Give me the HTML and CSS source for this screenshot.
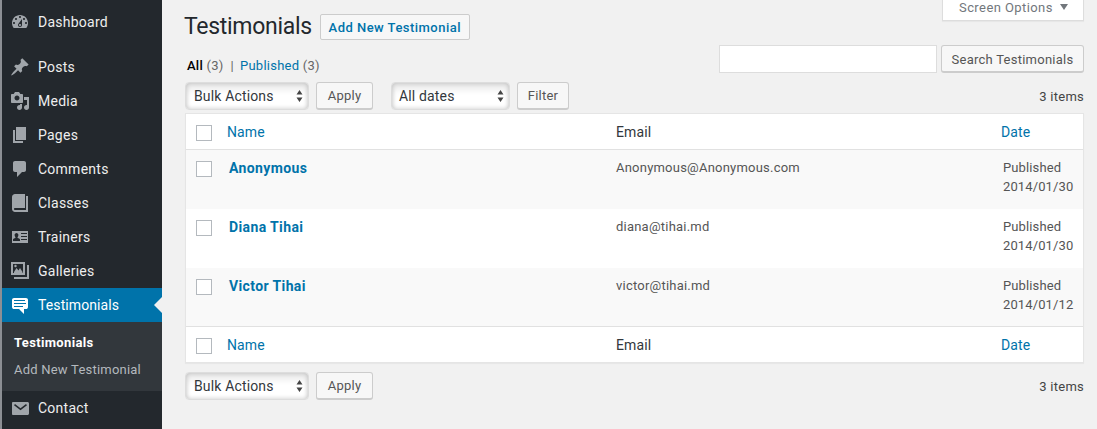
FILE: index.html
```html
<!DOCTYPE html>
<html lang="en">
<head>
<meta charset="utf-8">
<title>Testimonials</title>
<link rel="stylesheet" href="styles.css">
</head>
<body>
<div class="app">
  <nav class="sidebar">
    <a class="item gap-after"><svg class="icon" viewBox="0 0 20 20"><path d="M3.76 16h12.48c1.1-1.37 1.76-3.11 1.76-5 0-4.42-3.58-8-8-8s-8 3.58-8 8c0 1.89.66 3.63 1.76 5zM10 4c.55 0 1 .45 1 1s-.45 1-1 1-1-.45-1-1 .45-1 1-1zM6 6c.55 0 1 .45 1 1s-.45 1-1 1-1-.45-1-1 .45-1 1-1zm8 0c.55 0 1 .45 1 1s-.45 1-1 1-1-.45-1-1 .45-1 1-1zm-5.37 5.55L12 7v6c0 1.1-.9 2-2 2s-2-.9-2-2c0-.57.24-1.08.63-1.45zM4 10c.55 0 1 .45 1 1s-.45 1-1 1-1-.45-1-1 .45-1 1-1zm12 0c.55 0 1 .45 1 1s-.45 1-1 1-1-.45-1-1 .45-1 1-1zm-5 3c0-.55-.45-1-1-1s-1 .45-1 1 .45 1 1 1 1-.45 1-1z"/></svg>Dashboard</a>
    <a class="item"><svg class="icon" viewBox="0 0 20 20"><path d="M10.44 3.02l1.82-1.82 6.36 6.35-1.83 1.82c-1.05-.68-2.48-.57-3.41.36l-.75.75c-.92.93-1.04 2.35-.35 3.41l-1.83 1.82-2.41-2.41-2.8 2.79c-.42.42-3.38 2.71-3.8 2.29s1.86-3.39 2.28-3.81l2.79-2.79L4.1 9.36l1.83-1.82c1.05.69 2.48.57 3.4-.36l.75-.75c.93-.92 1.05-2.35.36-3.41z"/></svg>Posts</a>
    <a class="item"><svg class="icon" viewBox="0 0 20 20"><path d="M13 11V4c0-.55-.45-1-1-1h-1.67L9 1H5L3.67 3H2c-.55 0-1 .45-1 1v7c0 .55.45 1 1 1h10c.55 0 1-.45 1-1zM7 4.5c1.38 0 2.5 1.12 2.5 2.5S8.38 9.5 7 9.5 4.5 8.38 4.5 7 5.62 4.5 7 4.5zM14 6h5v10.5c0 1.38-1.12 2.5-2.5 2.5S14 17.88 14 16.5s1.12-2.5 2.5-2.5c.17 0 .34.02.5.05V9h-3V6zm-4 8.05V13h2v3.5c0 1.38-1.12 2.5-2.5 2.5S7 17.88 7 16.5 8.12 14 9.5 14c.17 0 .34.02.5.05z"/></svg>Media</a>
    <a class="item"><svg class="icon" viewBox="0 0 20 20"><path d="M6 15V2h10v13H6zm-1 1h8v2H3V5h2v11z"/></svg>Pages</a>
    <a class="item"><svg class="icon" viewBox="0 0 20 20"><path d="M5 2h9c1.1 0 2 .9 2 2v7c0 1.1-.9 2-2 2h-2l-5 5v-5H5c-1.1 0-2-.9-2-2V4c0-1.1.9-2 2-2z"/></svg>Comments</a>
    <a class="item"><svg class="icon" viewBox="0 0 20 20"><path d="M16 3h2v16H5c-1.66 0-3-1.34-3-3V4c0-1.66 1.34-3 3-3h10v14H5c-.55 0-1 .45-1 1s.45 1 1 1h11V3z"/></svg>Classes</a>
    <a class="item"><svg class="icon" viewBox="0 0 20 20"><path fill-rule="evenodd" d="M2 4h16v12H2zM11 6v1h6V6zm0 3v1h6V9zm0 3v1h6v-1zM3 14h7v-1.5c0-.8-1.6-1.3-2.3-1.6-.3-.2-.3-.6 0-1 .5-.5.7-1 .7-1.9 0-1-.8-2-1.9-2S4.600 7 4.600 8c0 .9.2 1.400.7 1.900.3.4.3.8 0 1-.7.3-2.300.8-2.300 1.600z"/></svg>Trainers</a>
    <a class="item"><svg class="icon" viewBox="0 0 20 20"><path fill-rule="evenodd" d="M1 1h14v13H1zM3 3v9h10V3zM4 11l2.500-4 2 2.500L10 7l2.500 4v1H4zM5.500 3.800a1.200 1.200 0 1 0 0 2.400 1.200 1.200 0 0 0 0-2.400zM17 4h2v14H4v-2h13z"/></svg>Galleries</a>
    <a class="item current"><svg class="icon" viewBox="0 0 20 20"><path d="M4 3h12c.55 0 1.02.2 1.41.59S18 4.45 18 5v7c0 .55-.2 1.02-.59 1.41S16.55 14 16 14h-2v5l-5-5H4c-.55 0-1.02-.2-1.41-.59S2 12.55 2 12V5c0-.55.2-1.02.59-1.41S3.45 3 4 3zm11 2H4v1h11V5zm1 3H4v1h12V8zm-3 3H4v1h9v-1z"/></svg>Testimonials</a>
    <div class="submenu">
      <a class="sub sub-current">Testimonials</a>
      <a class="sub">Add New Testimonial</a>
    </div>
    <a class="item"><svg class="icon" viewBox="0 0 20 20"><path fill-rule="evenodd" d="M3 4h14.500c.8 0 1.500.7 1.500 1.500v10c0 .8-.7 1.500-1.500 1.500H3c-.8 0-1-.7-1-1.500v-10C2 4.700 2.200 4 3 4zM4 7.200l6.500 5 6.500-5-1-1.200-5.500 4.200L5 6z"/></svg>Contact</a>
  </nav>

  <main class="main">
    <div class="screen-row"><div class="screen-options">Screen Options<span class="caret"></span></div></div>
    <div class="title-row">
      <h1 class="title">Testimonials</h1>
      <a class="add-new">Add New Testimonial</a>
    </div>
    <div class="filter-row">
      <div class="subsub"><b>All</b> <span class="count">(3)</span><span class="sep">|</span><a class="link">Published</a> <span class="count">(3)</span></div>
      <div class="search">
        <div class="input"></div>
        <div class="btn search-btn">Search Testimonials</div>
      </div>
    </div>
    <div class="toolbar">
      <div class="select bulk">Bulk Actions<svg class="updown" viewBox="0 0 7 14"><path d="M3.500 1L6.500 5.500H.5zM3.500 13L.5 8.500h6z"/></svg></div>
      <div class="btn apply">Apply</div>
      <div class="select dates">All dates<svg class="updown" viewBox="0 0 7 14"><path d="M3.500 1L6.500 5.500H.5zM3.500 13L.5 8.500h6z"/></svg></div>
      <div class="btn filter">Filter</div>
      <div class="items">3 items</div>
    </div>
    <table class="list">
      <colgroup><col class="c-check"><col class="c-name"><col class="c-email"><col class="c-date"></colgroup>
      <thead>
        <tr><td class="check"><span class="box"></span></td><th class="link">Name</th><th class="plain">Email</th><th class="link">Date</th></tr>
      </thead>
      <tbody>
        <tr class="odd"><td class="check"><span class="box"></span></td><td class="name">Anonymous</td><td class="email">Anonymous@Anonymous.com</td><td class="date">Published<br>2014/01/30</td></tr>
        <tr><td class="check"><span class="box"></span></td><td class="name">Diana Tihai</td><td class="email">diana@tihai.md</td><td class="date">Published<br>2014/01/30</td></tr>
        <tr class="odd short"><td class="check"><span class="box"></span></td><td class="name">Victor Tihai</td><td class="email">victor@tihai.md</td><td class="date">Published<br>2014/01/12</td></tr>
      </tbody>
      <tfoot>
        <tr><td class="check"><span class="box"></span></td><th class="link">Name</th><th class="plain">Email</th><th class="link">Date</th></tr>
      </tfoot>
    </table>
    <div class="toolbar bottom">
      <div class="select bulk">Bulk Actions<svg class="updown" viewBox="0 0 7 14"><path d="M3.500 1L6.500 5.500H.5zM3.500 13L.5 8.500h6z"/></svg></div>
      <div class="btn apply">Apply</div>
      <div class="items">3 items</div>
    </div>
  </main>
</div>
</body>
</html>
```
FILE: styles.css
```css
* { box-sizing: border-box; }
html, body { margin: 0; padding: 0; height: 429px; overflow: hidden; }
body { background: #f1f1f1; font-family: Roboto, "Liberation Sans", sans-serif; font-size: 13px; color: #444; }
.app { display: flex; height: 429px; }

.sidebar { width: 162px; flex: none; background: #23282d; border-left: 2px solid #8c8f94; padding-top: 5px; }
.item { display: flex; align-items: center; height: 34px; padding-left: 8px; color: #eee; font-size: 14px; letter-spacing: .25px; position: relative; }
.gap-after { margin-bottom: 11px; }
.icon { width: 20px; height: 20px; margin-right: 8px; fill: #a0a5aa; flex: none; }
.current { background: #0073aa; color: #fff; letter-spacing: .1px; }
.current .icon { fill: #fff; }
.current::after { content: ""; position: absolute; right: 0; top: 9px; border: 8px solid transparent; border-right-color: #f1f1f1; border-left-width: 0; }
.submenu { background: #32373c; height: 69px; padding: 8px 0 0 12px; }
.sub { display: block; height: 27px; line-height: 26px; color: #b4b9be; font-size: 13px; letter-spacing: .22px; }
.sub-current { color: #fff; font-weight: 700; letter-spacing: .35px; }

.main { flex: 1; padding: 0 13px 0 23px; min-width: 0; }
.screen-row { display: flex; justify-content: flex-end; height: 0; }
.screen-options { width: 142px; height: 22px; flex: none; margin-top: -1px; background: #fff; border: 1px solid #ddd; border-top: 0; box-shadow: 0 1px 1px rgba(0,0,0,.04); color: #72777c; font-size: 13px; letter-spacing: .42px; display: flex; align-items: center; padding: 0 0 5px 16px; }
.caret { margin-left: 7px; border: 4px solid transparent; border-top: 6px solid #72777c; border-bottom: 0; width: 8px; height: 6px; box-sizing: border-box; }

.title-row { display: flex; align-items: center; padding-top: 14px; height: 40px; margin-left: -1px; }
.title { margin: 0 8px 0 0; font-size: 23px; font-weight: 400; color: #23282d; line-height: 26px; letter-spacing: -.3px; }
.add-new { display: flex; align-items: center; height: 26px; width: 150px; justify-content: center; border: 1px solid #ccc; border-radius: 2px; background: #f7f7f7; color: #0073aa; font-weight: 500; font-size: 13px; letter-spacing: .47px; }

.filter-row { display: flex; justify-content: space-between; height: 42px; padding-top: 5px; }
.subsub { padding: 13px 0 0 2px; line-height: 16px; color: #666; letter-spacing: .25px; }
.subsub b { color: #000; font-weight: 500; }
.sep { margin: 0 6px 0 7px; }
.link { color: #0073aa; }
.search { display: flex; gap: 4px; height: 28px; }
.input { width: 218px; height: 28px; background: #fff; border: 1px solid #ddd; }
.btn { display: flex; align-items: center; justify-content: center; height: 28px; background: #f7f7f7; border: 1px solid #ccc; border-bottom-width: 2px; border-radius: 3px; color: #555; font-size: 13px; letter-spacing: .25px; }
.search-btn { width: 143px; padding-top: 1px; }

.toolbar { display: flex; align-items: center; height: 31px; padding-bottom: 3px; }
.select { display: flex; align-items: center; justify-content: space-between; height: 28px; background: #fff; border: 1px solid #ddd; border-radius: 4px; box-shadow: inset 0 0 5px rgba(0,0,0,.22), inset 0 7px 6px rgba(0,0,0,.08); color: #32373c; font-size: 14px; letter-spacing: .15px; padding: 0 5px 0 8px; }
.updown { width: 7px; height: 14px; fill: #444; }
.bulk { width: 124px; }
.dates { width: 119px; margin-left: 18px; padding-left: 7px; }
.apply { width: 57px; margin-left: 7px; }
.filter { width: 52px; margin-left: 7px; }
.items { margin-left: auto; letter-spacing: .25px; color: #444; }

.list { width: 899px; border-collapse: separate; border-spacing: 0; table-layout: fixed; background: #fff; border: 1px solid #e5e5e5; box-shadow: 0 1px 1px rgba(0,0,0,.04); }
.c-check { width: 31px; }
.c-name { width: 389px; }
.c-email { width: 385px; }
.list th, .list td { padding: 0; vertical-align: top; text-align: left; font-weight: 400; }
.list th { font-size: 14px; letter-spacing: .1px; padding: 9px 10px 0; height: 36px; line-height: 18px; }
.list thead th, .list thead td { border-bottom: 1px solid #e1e1e1; }
.list tfoot th, .list tfoot td { border-top: 1px solid #e1e1e1; }
.list .plain { color: #32373c; }
.list .check { padding: 11px 0 0 10px; }
.box { display: block; width: 16px; height: 16px; background: #fff; border: 1px solid #b4b9be; }
tbody tr { height: 59px; }
tbody .short { height: 58px; }
.odd td { background: #f9f9f9; }
.list .name { font-size: 14px; font-weight: 700; color: #0073aa; padding: 9px 12px 0; line-height: 18px; letter-spacing: .38px; }
.list .email { font-size: 13px; color: #555; padding: 9px 10px 0; line-height: 18px; letter-spacing: .22px; }
.list .date { font-size: 13px; color: #555; padding: 8px 12px 0; line-height: 19px; letter-spacing: .12px; }
.bottom { margin-top: 9px; }
```
